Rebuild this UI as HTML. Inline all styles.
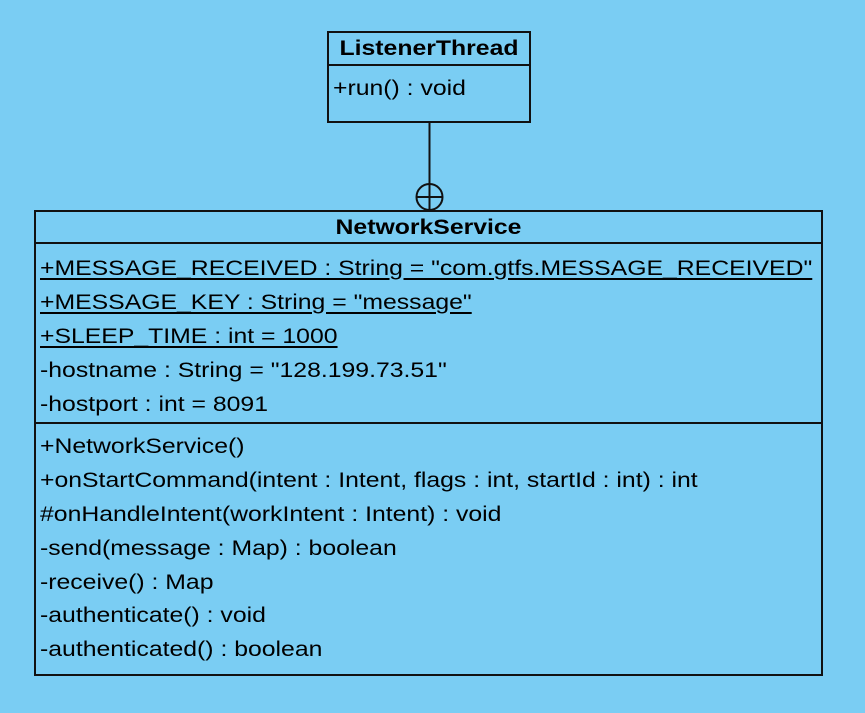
<!DOCTYPE html>
<html><head><style>
body{margin:0;width:865px;height:713px;background:#7acdf3;position:relative;overflow:hidden;font-family:"Liberation Sans",Arial,sans-serif;color:#000}
.b{position:absolute;border:2px solid #111;box-sizing:border-box}
.h{position:absolute;left:0;height:2px;background:#111}
.t{position:absolute;font-size:21px;line-height:24px;white-space:nowrap;transform:scaleX(1.18);transform-origin:0 0}
.c{transform-origin:50% 0}
.u{text-decoration:underline;text-underline-offset:3px;text-decoration-thickness:1.5px}
</style></head><body>
<div class="b" style="left:327px;top:31px;width:204px;height:92px">
 <div class="h" style="top:31px;width:200px"></div>
 <div class="t c" style="left:0;width:200px;top:4px;text-align:center;font-weight:bold">ListenerThread</div>
 <div class="t" style="left:4px;top:44px">+run() : void</div>
</div>
<svg style="position:absolute;left:0;top:0" width="865" height="713">
 <line x1="429.5" y1="123" x2="429.5" y2="211" stroke="#111" stroke-width="2"/>
 <circle cx="429.5" cy="197" r="13" fill="none" stroke="#111" stroke-width="2"/>
 <line x1="416.5" y1="197" x2="442.5" y2="197" stroke="#111" stroke-width="2"/>
</svg>
<div class="b" style="left:34px;top:210px;width:789px;height:466px">
 <div class="h" style="top:30px;width:785px"></div>
 <div class="h" style="top:210px;width:785px"></div>
 <div class="t c" style="left:0;width:785px;top:4px;text-align:center;font-weight:bold">NetworkService</div>
 <div class="t u" style="left:4px;top:45px">+MESSAGE_RECEIVED : String = "com.gtfs.MESSAGE_RECEIVED"</div>
 <div class="t u" style="left:4px;top:79px">+MESSAGE_KEY : String = "message"</div>
 <div class="t u" style="left:4px;top:113px">+SLEEP_TIME : int = 1000</div>
 <div class="t" style="left:4px;top:147px">-hostname : String = "128.199.73.51"</div>
 <div class="t" style="left:4px;top:181px">-hostport : int = 8091</div>
 <div class="t" style="left:4px;top:223px">+NetworkService()</div>
 <div class="t" style="left:4px;top:257px">+onStartCommand(intent : Intent, flags : int, startId : int) : int</div>
 <div class="t" style="left:4px;top:291px">#onHandleIntent(workIntent : Intent) : void</div>
 <div class="t" style="left:4px;top:325px">-send(message : Map) : boolean</div>
 <div class="t" style="left:4px;top:359px">-receive() : Map</div>
 <div class="t" style="left:4px;top:392px">-authenticate() : void</div>
 <div class="t" style="left:4px;top:426px">-authenticated() : boolean</div>
</div>
</body></html>
